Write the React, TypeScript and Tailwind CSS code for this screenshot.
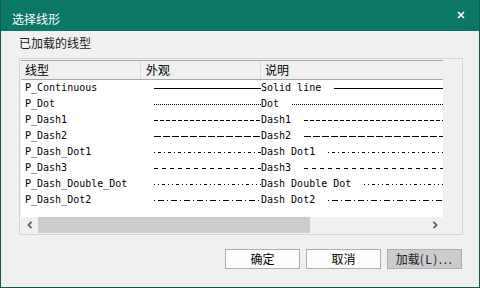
const rows = [
  { name: "P_Continuous", desc: "Solid line", dash: "" },
  { name: "P_Dot", desc: "Dot", dash: "1 1" },
  { name: "P_Dash1", desc: "Dash1", dash: "4 2" },
  { name: "P_Dash2", desc: "Dash2", dash: "7 2" },
  { name: "P_Dash_Dot1", desc: "Dash Dot1", dash: "1 3 3 3" },
  { name: "P_Dash3", desc: "Dash3", dash: "4 4" },
  { name: "P_Dash_Double_Dot", desc: "Dash Double Dot", dash: "1 3 1 3 3 3" },
  { name: "P_Dash_Dot2", desc: "Dash Dot2", dash: "1 3 6 3" },
];

const Line = ({ dash, className }: { dash: string; className: string }) => (
  <svg className={className} height="1" preserveAspectRatio="none">
    <line x1="0" y1="0.5" x2="2000" y2="0.5" stroke="#000" strokeWidth="1" strokeDasharray={dash || undefined} />
  </svg>
);

const Chevron = ({ left }: { left?: boolean }) => (
  <svg width="6" height="8" viewBox="0 0 6 8">
    <polyline
      points={left ? "4.5,0.8 1.5,4 4.5,7.2" : "1.5,0.8 4.5,4 1.5,7.2"}
      fill="none"
      stroke="#606060"
      strokeWidth="1.8"
    />
  </svg>
);

const App = () => {
  return (
    <div className="w-[480px] h-[288px] flex flex-col bg-[#f0f0f0] border-x border-b border-[#0f5a4f] font-['Noto_Sans_CJK_SC',sans-serif] text-[12px] text-black">
      <div className="h-[31px] shrink-0 bg-[#0b7766] flex items-center justify-between pl-[11px] pr-[14px] pt-[6px]">
        <span className="text-white leading-[16px]">选择线形</span>
        <svg width="8" height="8" viewBox="0 0 8 8" className="-mt-[8px]">
          <path d="M1 1 L7 7 M7 1 L1 7" stroke="#fff" strokeWidth="1.6" />
        </svg>
      </div>

      <div className="pl-[18px] mt-[4px] leading-[16px] text-[#1a1a1a]">已加载的线型</div>

      <div className="ml-[18px] mt-[7px] w-[444px] h-[177px] border border-[#d5d5d5] p-px flex">
        <div className="w-[422px] flex flex-col">
          <div className="h-[20px] flex border-y border-[#a6a6a6] bg-[#f0f0f0] leading-[18px]">
            <div className="w-[120px] pl-[4px] border-r border-[#d9d9d9]">线型</div>
            <div className="w-[120px] pl-[5px] border-r border-[#d9d9d9]">外观</div>
            <div className="flex-1 pl-[4px]">说明</div>
          </div>
          <div className="flex-1 bg-white flex flex-col font-['DejaVu_Sans_Mono',monospace] text-[10px]">
            {rows.map((r) => (
              <div key={r.name} className="h-[16px] flex items-center overflow-hidden whitespace-nowrap">
                <div className="w-[133px] shrink-0 pl-[4px] leading-[16px]">{r.name}</div>
                <Line dash={r.dash} className="w-[107px] shrink-0" />
                <div className="shrink-0 leading-[16px]">{r.desc}</div>
                <Line dash={r.dash} className="ml-[13px] flex-1 min-w-0" />
              </div>
            ))}
          </div>
          <div className="h-[16px] flex bg-[#f0f0f0]">
            <div className="w-[17px] flex items-center justify-center">
              <Chevron left />
            </div>
            <div className="w-[272px] bg-[#cdcdcd]" />
            <div className="flex-1" />
            <div className="w-[17px] flex items-center justify-center">
              <Chevron />
            </div>
          </div>
        </div>
        <div className="flex-1" />
      </div>

      <div className="mt-[14px] pr-[17px] flex justify-end gap-[6px]">
        <button className="w-[75px] h-[20px] border border-[#adadad] bg-[#fdfdfd] leading-[18px]">确定</button>
        <button className="w-[75px] h-[20px] border border-[#adadad] bg-[#fdfdfd] leading-[18px]">取消</button>
        <button className="w-[75px] h-[20px] border border-[#adadad] bg-[#cccccc] leading-[18px] text-[#222]">
          加载<span className="tracking-[1.5px]">(L)...</span>
        </button>
      </div>
    </div>
  );
};

export default App;
